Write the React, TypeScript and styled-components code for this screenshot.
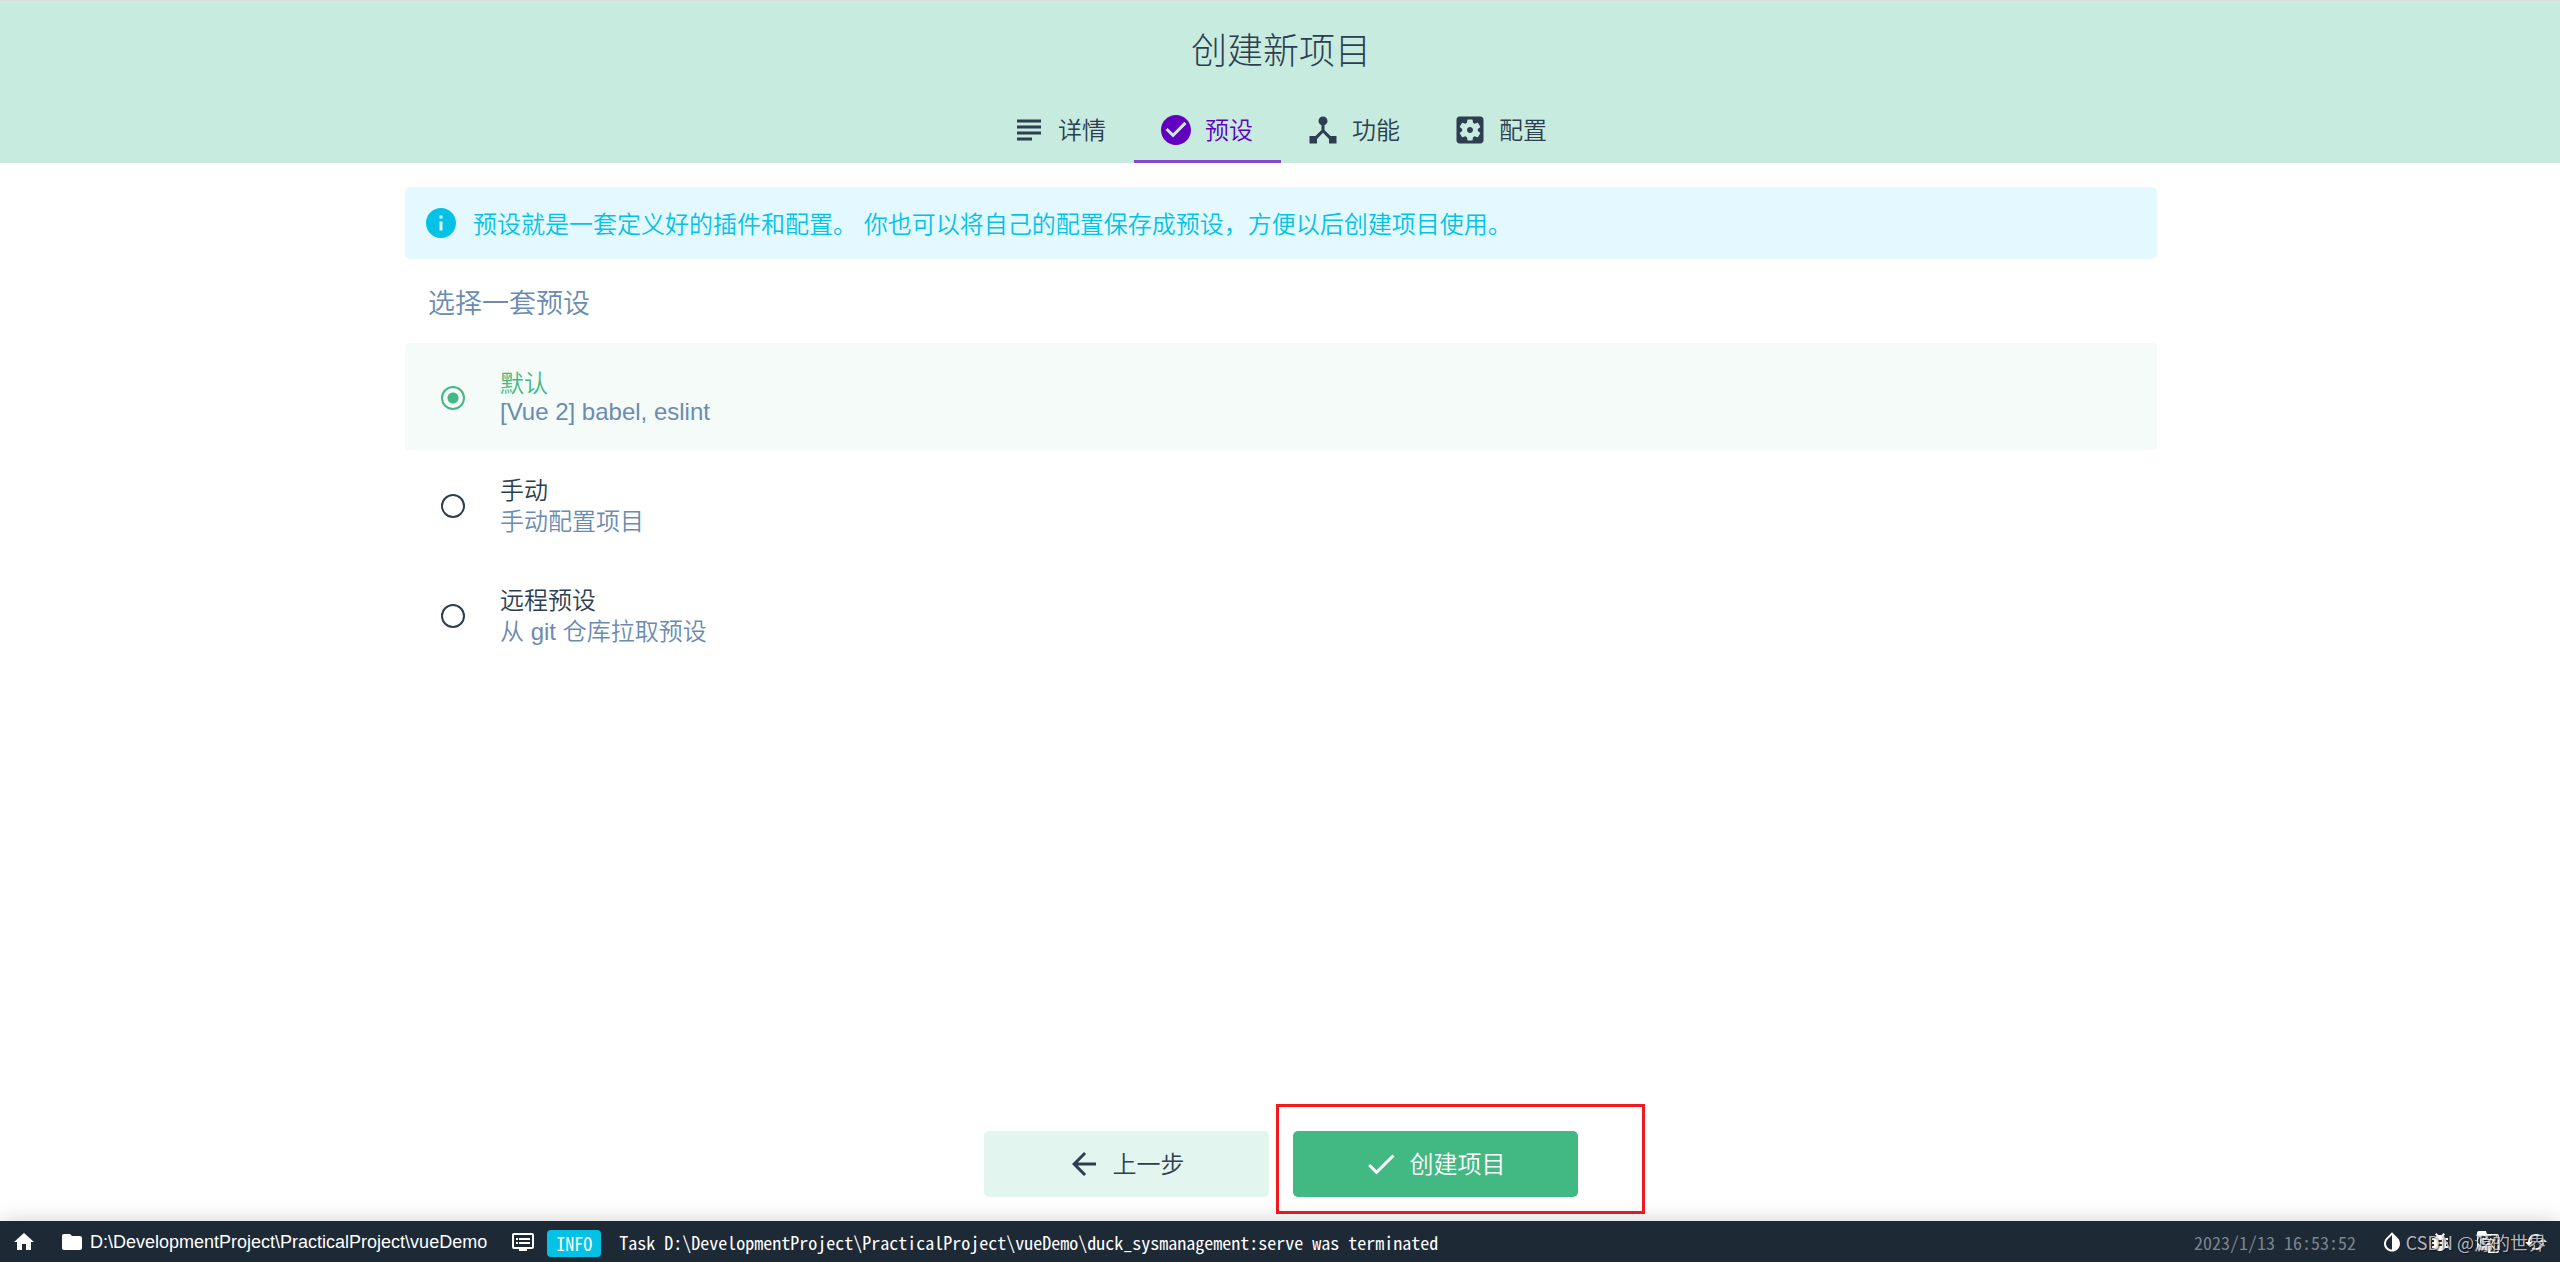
import React, { useState } from "react";
import styled, { createGlobalStyle } from "styled-components";

const sans = `"Liberation Sans", "Noto Sans CJK SC", sans-serif`;
const mono = `"Noto Sans Mono CJK SC", "Liberation Mono", monospace`;

const GlobalStyle = createGlobalStyle`
  * { box-sizing: border-box; }
  body {
    margin: 0;
    background: #fff;
    color: #2c3e50;
    font: 350 24px/31px ${sans};
  }
  button, input { font: inherit; color: inherit; }
`;

const Page = styled.div`
  display: flex;
  flex-direction: column;
  min-height: 100vh;
`;

const Header = styled.header`
  display: flex;
  flex-direction: column;
  align-items: center;
  padding-left: 2px;
  border-top: 1px solid #dcdcdc;
  background: #c7ebdf;
`;

const Title = styled.h1`
  margin: 0;
  padding: 27px 0 21px;
  font-size: 36px;
  font-weight: 300;
  line-height: 48px;
`;

const Tabs = styled.nav`
  display: flex;
`;

const Tab = styled.button<{ $active: boolean }>`
  display: flex;
  align-items: center;
  gap: 11px;
  width: 147px;
  height: 66px;
  padding: 3px 0 0 24px;
  border: 0;
  border-bottom: 3px solid ${(p) => (p.$active ? "#8447cc" : "transparent")};
  background: none;
  color: ${(p) => (p.$active ? "#6200c0" : "#2c3e50")};
  white-space: nowrap;
  cursor: pointer;
`;

const Svg = styled.svg<{ $size: number }>`
  flex: none;
  width: ${(p) => p.$size}px;
  height: ${(p) => p.$size}px;
  fill: currentColor;
`;

const Content = styled.main`
  flex: 1;
  width: 100%;
  max-width: 1802px;
  margin: 0 auto;
  padding: 24px 24px 24px 26px;
`;

const Notice = styled.p`
  display: flex;
  align-items: center;
  gap: 14px;
  margin: 0;
  padding: 18px;
  border-radius: 5px;
  background: #e3f9ff;
  color: #03c2e6;
`;

const NoticeText = styled.span`
  padding-top: 4px;
  line-height: 32px;
`;

const Presets = styled.fieldset`
  margin: 0;
  padding: 0;
  border: 0;
`;

const Legend = styled.legend`
  padding: 27px 23px 21px;
  color: #6b8bb0;
  font-size: 27px;
  line-height: 36px;
`;

const Preset = styled.label<{ $selected: boolean }>`
  display: flex;
  align-items: center;
  gap: 35px;
  padding: 25px 36px 23px;
  border-radius: 3px;
  background: ${(p) => (p.$selected ? "#f4fbf8" : "transparent")};
  color: ${(p) => (p.$selected ? "#42b983" : "#2c3e50")};
  cursor: pointer;
`;

const Radio = styled.input`
  appearance: none;
  flex: none;
  width: 24px;
  height: 24px;
  margin: 0;
  border: 2px solid currentColor;
  border-radius: 50%;
  &:checked {
    background: radial-gradient(circle, currentColor 5px, transparent 6px);
  }
`;

const PresetText = styled.span`
  display: grid;
`;

const Description = styled.span<{ $latin: boolean }>`
  padding-bottom: ${(p) => (p.$latin ? 2 : 0)}px;
  color: #6b8bb0;
  line-height: ${(p) => (p.$latin ? 26 : 31)}px;
`;

const Actions = styled.footer`
  display: flex;
  justify-content: center;
  gap: 24px;
  padding: 24px 24px 24px 26px;
`;

const ActionButton = styled.button<{ $primary?: boolean }>`
  display: flex;
  align-items: center;
  justify-content: center;
  gap: 11px;
  width: 285px;
  height: 66px;
  padding: 0 3px 0 0;
  border: 0;
  border-radius: 5px;
  background: ${(p) => (p.$primary ? "#42b983" : "#e3f5ef")};
  color: ${(p) => (p.$primary ? "#fff" : "#2c3e50")};
  cursor: pointer;
`;

const Marked = styled.div`
  position: relative;
  &::after {
    content: "";
    position: absolute;
    inset: -27px -67px -17px -17px;
    border: 3px solid #f01a22;
    pointer-events: none;
  }
`;

const StatusBar = styled.footer`
  position: relative;
  display: flex;
  align-items: center;
  height: 41px;
  background: #1d2935;
  color: #fff;
  font-size: 18px;
  line-height: 24px;
  box-shadow: 0 0 21px rgba(0, 0, 0, 0.18);
`;

const BarButton = styled.button`
  display: flex;
  align-items: center;
  gap: 6px;
  height: 100%;
  padding: 0 12px;
  border: 0;
  background: none;
  cursor: pointer;
`;

const Log = styled.button`
  display: flex;
  flex: 1;
  align-items: center;
  gap: 12px;
  height: 100%;
  padding: 0 12px;
  border: 0;
  background: none;
  cursor: pointer;
`;

const Level = styled.span`
  margin: 4px 6px 0 0;
  padding: 1px 9px 2px;
  border-radius: 4px;
  background: #03c2e6;
  font: 18px/24px ${mono};
`;

const Message = styled.span`
  padding-top: 1px;
  font: 18px/24px ${mono};
`;

const Time = styled.time`
  padding: 1px 12px 0;
  color: #7c848c;
  font: 18px/24px ${mono};
`;

const Tools = styled.div`
  display: flex;
  height: 100%;
`;

const Watermark = styled.span`
  position: absolute;
  right: 14px;
  bottom: 8px;
  color: rgba(220, 222, 224, 0.8);
  font: 18px/24px "Noto Sans CJK SC", sans-serif;
  text-shadow: 1px 1px 1px rgba(0, 0, 0, 0.6);
  pointer-events: none;
`;

const paths = {
  subject: "M14 17H4v2h10v-2zm6-8H4v2h16V9zM4 15h16v-2H4v2zM4 5v2h16V5H4z",
  check:
    "M12 2C6.48 2 2 6.48 2 12s4.48 10 10 10 10-4.48 10-10S17.52 2 12 2zm-2 15l-5-5 1.41-1.41L10 14.17l7.59-7.59L19 8l-9 9z",
  hub: "M17 16l-4-4V8.82C14.16 8.4 15 7.3 15 6c0-1.66-1.34-3-3-3S9 4.34 9 6c0 1.3.84 2.4 2 2.82V12l-4 4H3v5h5v-3.05l4-4.2 4 4.2V21h5v-5h-4z",
  gear:
    "M12 10c-1.1 0-2 .9-2 2s.9 2 2 2 2-.9 2-2-.9-2-2-2zm7-7H5c-1.11 0-2 .9-2 2v14c0 1.1.89 2 2 2h14c1.11 0 2-.9 2-2V5c0-1.1-.89-2-2-2zm-1.75 9c0 .23-.02.46-.05.68l1.48 1.16c.13.11.17.3.08.45l-1.4 2.42c-.09.15-.27.21-.43.15l-1.74-.7c-.36.28-.76.51-1.18.69l-.26 1.85c-.03.17-.18.3-.35.3h-2.8c-.17 0-.32-.13-.35-.29l-.26-1.85c-.43-.18-.82-.41-1.18-.69l-1.74.7c-.16.06-.34 0-.43-.15l-1.4-2.42c-.09-.15-.05-.34.08-.45l1.48-1.16c-.03-.23-.05-.46-.05-.69 0-.23.02-.46.05-.68l-1.48-1.16c-.13-.11-.17-.3-.08-.45l1.4-2.42c.09-.15.27-.21.43-.15l1.74.7c.36-.28.76-.51 1.18-.69l.26-1.85c.03-.17.18-.3.35-.3h2.8c.17 0 .32.13.35.29l.26 1.85c.43.18.82.41 1.18.69l1.74-.7c.16-.06.34 0 .43.15l1.4 2.42c.09.15.05.34-.08.45l-1.48 1.16c.03.23.05.46.05.69z",
  info: "M12 2C6.48 2 2 6.48 2 12s4.48 10 10 10 10-4.48 10-10S17.52 2 12 2zm1 15h-2v-6h2v6zm0-8h-2V7h2v2z",
  back: "M20 11H7.83l5.59-5.59L12 4l-8 8 8 8 1.41-1.41L7.83 13H20v-2z",
  done: "M9 16.2L4.8 12l-1.4 1.4L9 19 21 7l-1.4-1.4L9 16.2z",
  home: "M10 20v-6h4v6h5v-8h3L12 3 2 12h3v8z",
  folder: "M10 4H4c-1.1 0-1.99.9-1.99 2L2 18c0 1.1.9 2 2 2h16c1.1 0 2-.9 2-2V8c0-1.1-.9-2-2-2h-8l-2-2z",
  dvr: "M21 3H3c-1.1 0-2 .9-2 2v12c0 1.1.9 2 2 2h5v2h8v-2h5c1.1 0 1.99-.9 1.99-2L23 5c0-1.1-.9-2-2-2zm0 14H3V5h18v12zm-2-9H8v2h11V8zm0 4H8v2h11v-2zM7 8H5v2h2V8zm0 4H5v2h2v-2z",
  invert:
    "M17.66 7.93L12 2.27 6.34 7.93c-3.12 3.12-3.12 8.19 0 11.31C7.9 20.8 9.95 21.58 12 21.58c2.05 0 4.1-.78 5.66-2.34 3.12-3.12 3.12-8.19 0-11.31zM12 19.59c-1.6 0-3.11-.62-4.24-1.76C6.62 16.69 6 15.19 6 13.59s.62-3.11 1.76-4.24L12 5.1v14.49z",
  bug: "M20 8h-2.81c-.45-.78-1.07-1.45-1.82-1.96L17 4.41 15.59 3l-2.17 2.17C12.96 5.06 12.49 5 12 5c-.49 0-.96.06-1.41.17L8.41 3 7 4.41l1.62 1.63C7.88 6.55 7.26 7.22 6.81 8H4v2h2.09c-.05.33-.09.66-.09 1v1H4v2h2v1c0 .34.04.67.09 1H4v2h2.81c1.04 1.79 2.97 3 5.19 3s4.15-1.21 5.19-3H20v-2h-2.09c.05-.33.09-.66.09-1v-1h2v-2h-2v-1c0-.34-.04-.67-.09-1H20V8zm-6 8h-4v-2h4v2zm0-4h-4v-2h4v2z",
  translate:
    "M21 4H11l-1-3H3c-1.1 0-2 .9-2 2v15c0 1.1.9 2 2 2h8l1 3h9c1.1 0 2-.9 2-2V6c0-1.1-.9-2-2-2zM7 16c-2.76 0-5-2.24-5-5s2.24-5 5-5c1.35 0 2.48.5 3.35 1.3L9.03 8.57c-.38-.36-1.04-.78-2.03-.78-1.74 0-3.15 1.44-3.15 3.21S5.26 14.21 7 14.21c2.01 0 2.84-1.44 2.92-2.41H7v-1.71h4.68c.07.31.12.61.12 1.02C11.8 13.97 9.89 16 7 16zm6.17-5.42h3.7c-.43 1.25-1.11 2.43-2.05 3.47-.31-.35-.6-.72-.86-1.1l-.79-2.37zm8.33 9.92c0 .55-.45 1-1 1H14l2-2.5-1.04-3.1 3.1 3.1.92-.92-3.3-3.25.02-.02c1.13-1.25 1.93-2.69 2.4-4.22H20v-1.3h-4.53V8h-1.29v1.29h-1.44L11.46 5.5h9.04c.55 0 1 .45 1 1v14z",
  cached:
    "M19 8l-4 4h3c0 3.31-2.69 6-6 6-1.01 0-1.97-.25-2.8-.7l-1.46 1.46C8.97 19.54 10.43 20 12 20c4.42 0 8-3.58 8-8h3l-4-4zM6 12c0-3.31 2.69-6 6-6 1.01 0 1.97.25 2.8.7l1.46-1.46C15.03 4.46 13.57 4 12 4c-4.42 0-8 3.58-8 8H1l4 4 4-4H6z",
};

type IconName = keyof typeof paths;

function Icon({ name, size = 36 }: { name: IconName; size?: number }) {
  return (
    <Svg $size={size} viewBox="0 0 24 24" aria-hidden="true">
      <path d={paths[name]} />
    </Svg>
  );
}

const tabs: { icon: IconName; label: string }[] = [
  { icon: "subject", label: "详情" },
  { icon: "check", label: "预设" },
  { icon: "hub", label: "功能" },
  { icon: "gear", label: "配置" },
];

const presets = [
  { id: "default", name: "默认", text: "[Vue 2] babel, eslint", latin: true },
  { id: "manual", name: "手动", text: "手动配置项目", latin: false },
  { id: "remote", name: "远程预设", text: "从 git 仓库拉取预设", latin: false },
];

const tools: { icon: IconName; label: string }[] = [
  { icon: "invert", label: "切换主题" },
  { icon: "bug", label: "报告问题" },
  { icon: "translate", label: "语言" },
  { icon: "cached", label: "刷新" },
];

export default function App() {
  const [tab, setTab] = useState(1);
  const [preset, setPreset] = useState("default");

  return (
    <Page>
      <GlobalStyle />
      <Header>
        <Title>创建新项目</Title>
        <Tabs>
          {tabs.map((t, i) => (
            <Tab key={t.label} type="button" $active={i === tab} onClick={() => setTab(i)}>
              <Icon name={t.icon} />
              {t.label}
            </Tab>
          ))}
        </Tabs>
      </Header>

      <Content>
        <Notice>
          <Icon name="info" />
          <NoticeText>
            预设就是一套定义好的插件和配置。 你也可以将自己的配置保存成预设，方便以后创建项目使用。
          </NoticeText>
        </Notice>
        <Presets>
          <Legend>选择一套预设</Legend>
          {presets.map((p) => (
            <Preset key={p.id} $selected={p.id === preset}>
              <Radio
                type="radio"
                name="preset"
                checked={p.id === preset}
                onChange={() => setPreset(p.id)}
              />
              <PresetText>
                {p.name}
                <Description $latin={p.latin}>{p.text}</Description>
              </PresetText>
            </Preset>
          ))}
        </Presets>
      </Content>

      <Actions>
        <ActionButton type="button">
          <Icon name="back" />
          上一步
        </ActionButton>
        <Marked>
          <ActionButton type="button" $primary>
            <Icon name="done" />
            创建项目
          </ActionButton>
        </Marked>
      </Actions>

      <StatusBar>
        <BarButton type="button" aria-label="主页">
          <Icon name="home" size={24} />
        </BarButton>
        <BarButton type="button">
          <Icon name="folder" size={24} />
          D:\DevelopmentProject\PracticalProject\vueDemo
        </BarButton>
        <Log type="button">
          <Icon name="dvr" size={24} />
          <Level>INFO</Level>
          <Message>
            Task D:\DevelopmentProject\PracticalProject\vueDemo\duck_sysmanagement:serve was terminated
          </Message>
        </Log>
        <Time>2023/1/13 16:53:52</Time>
        <Tools>
          {tools.map((t) => (
            <BarButton key={t.icon} type="button" aria-label={t.label}>
              <Icon name={t.icon} size={24} />
            </BarButton>
          ))}
        </Tools>
        <Watermark>CSDN @源的世界</Watermark>
      </StatusBar>
    </Page>
  );
}
